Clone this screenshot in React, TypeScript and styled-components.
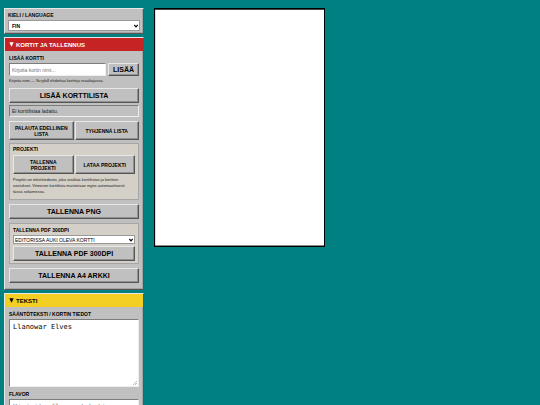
import React from "react";
import styled, { createGlobalStyle, css } from "styled-components";

const GlobalStyle = createGlobalStyle`
  *, *::before, *::after { box-sizing: border-box; }
  html, body { height: 100%; overflow: hidden; }
  body {
    margin: 0;
    background: #008080;
    color: #000;
    font-family: "Liberation Sans", Arial, sans-serif;
    font-size: 5px;
    line-height: 6px;
  }
`;

const raised = css`
  border: 1px solid;
  border-color: #e8e8e8 #555 #555 #e8e8e8;
`;

const sunken = css`
  border: 1px solid;
  border-color: #7c7c7c #eee #eee #7c7c7c;
`;

const Page = styled.div`
  display: grid;
  grid-template-columns: 140px 1fr;
  align-items: start;
  gap: 10px;
  padding: 8px 4px;
`;

const Sidebar = styled.aside`
  display: flex;
  flex-direction: column;
  gap: 3px;
`;

const Panel = styled.section`
  ${raised}
  background: #c0c0c0;
  box-shadow: inset -1px -1px 0 #a4a4a4;
`;

const LanguageBody = styled.div`
  display: flex;
  flex-direction: column;
  gap: 2px;
  padding: 3px 3px 2px;
`;

const PanelTitle = styled.button<{ $tone: "red" | "yellow" }>`
  display: flex;
  align-items: center;
  gap: 2px;
  width: 100%;
  height: 13px;
  padding: 0 4px;
  border: 0;
  background: ${(p) => (p.$tone === "red" ? "#c62424" : "#f2cf22")};
  color: ${(p) => (p.$tone === "red" ? "#fff" : "#000")};
  font: bold 6px/8px "Liberation Sans", Arial, sans-serif;
`;

const Triangle = styled.svg`
  width: 5px;
  height: 5px;
  fill: currentColor;
`;

const PanelBody = styled.div`
  display: flex;
  flex-direction: column;
  padding: 4px 4px 6px;
`;

const Label = styled.label`
  display: block;
  font-weight: bold;
`;

const GroupTitle = styled.h3`
  margin: 0;
  font-size: 5px;
  line-height: 6px;
`;

const AddRow = styled.div`
  display: grid;
  grid-template-columns: 1fr 31px;
  gap: 2px;
  margin: 2px 0;
`;

const TextInput = styled.input`
  ${sunken}
  min-width: 0;
  height: 13px;
  padding: 0 2px;
  background: #fff;
  font: 5px/6px "Liberation Sans", Arial, sans-serif;
  &::placeholder { color: #757575; }
`;

const Button = styled.button<{ $small?: boolean }>`
  ${raised}
  min-width: 0;
  width: 100%;
  height: ${(p) => (p.$small ? "19px" : "15px")};
  padding: 0 4px;
  background: #c0c0c0;
  box-shadow: inset -1px -1px 0 #909090;
  color: #000;
  font: bold ${(p) => (p.$small ? "5px/6px" : "7px/8px")} "Liberation Sans", Arial, sans-serif;
`;

const AddButton = styled(Button)`
  height: 13px;
  padding: 0;
`;

const Hint = styled.p`
  margin: 0;
  color: #222;
  font-size: 4px;
  line-height: 6px;
`;

const Status = styled.output`
  ${sunken}
  display: block;
  height: 12px;
  margin: 2px 0 4px;
  padding: 2px;
  color: #222;
`;

const ButtonPair = styled.div`
  display: grid;
  grid-template-columns: 1fr 1fr;
  gap: 1px;
`;

const Group = styled.div`
  display: flex;
  flex-direction: column;
  border: 1px solid #a6a6a6;
  background: #d4d0c8;
`;

const ProjectGroup = styled(Group)`
  gap: 3px;
  margin: 3px 0 4px;
  padding: 2px 3px 4px;
`;

const ProjectHint = styled(Hint)`
  padding-right: 8px;
`;

const PdfGroup = styled(Group)`
  gap: 2px;
  margin: 4px 0;
  padding: 3px 3px 2px;
`;

const SelectBox = styled.div`
  display: grid;
  align-items: center;
`;

const Select = styled.select<{ $bold?: boolean }>`
  grid-area: 1 / 1;
  appearance: none;
  width: 100%;
  height: ${(p) => (p.$bold ? "11px" : "9px")};
  padding: 0 10px 0 ${(p) => (p.$bold ? "3px" : "1px")};
  border: 1px solid #999;
  border-radius: 0;
  background: #fff;
  color: #000;
  font: ${(p) => (p.$bold ? "bold" : "normal")} 5px/6px "Liberation Sans", Arial, sans-serif;
`;

const Chevron = styled.svg`
  grid-area: 1 / 1;
  justify-self: end;
  width: 4px;
  height: 4px;
  margin-right: 2px;
  fill: none;
  stroke: #000;
  stroke-width: 1.2;
  pointer-events: none;
`;

const TextArea = styled.textarea`
  ${sunken}
  display: block;
  width: 100%;
  height: 68px;
  margin: 2px 0 4px;
  padding: 3px;
  background: #fff;
  color: #000;
  font: 7px/8px "DejaVu Sans Mono", monospace;
  overflow: hidden;
  resize: none;
  &::placeholder { color: #757575; }
`;

const TextAreaBox = styled.div`
  display: grid;
  & > * { grid-area: 1 / 1; }
`;

const Grip = styled.svg`
  place-self: end;
  width: 4px;
  height: 4px;
  margin: 0 2px 6px 0;
  stroke: #777;
  stroke-width: 0.5;
`;

const Card = styled.canvas`
  display: block;
  width: 171px;
  height: 239px;
  border: 1px solid #000;
  box-shadow: inset 0 1px 0 #444, inset 0 -1px 0 #888, inset 1px 0 0 #ddd;
  background: #fff;
`;

type Option = { value: string; text: string };

function DropDown({ id, options, bold }: { id: string; options: Option[]; bold?: boolean }) {
  return (
    <SelectBox>
      <Select id={id} $bold={bold}>
        {options.map((o) => (
          <option key={o.value} value={o.value}>{o.text}</option>
        ))}
      </Select>
      <Chevron viewBox="0 0 4 4" aria-hidden="true"><path d="M0.3 1 2 2.8 3.7 1" /></Chevron>
    </SelectBox>
  );
}

function Title({ tone, children }: { tone: "red" | "yellow"; children: React.ReactNode }) {
  return (
    <PanelTitle type="button" aria-expanded="true" $tone={tone}>
      <Triangle viewBox="0 0 5 5" aria-hidden="true"><path d="M.3 .3H4.7L2.5 4.8Z" /></Triangle>
      {children}
    </PanelTitle>
  );
}

function ResizableText({ id, value, placeholder }: { id: string; value?: string; placeholder?: string }) {
  return (
    <TextAreaBox>
      <TextArea id={id} defaultValue={value} placeholder={placeholder} spellCheck={false} />
      <Grip viewBox="0 0 4 4" aria-hidden="true"><path d="M0 4 4 0M2 4 4 2" /></Grip>
    </TextAreaBox>
  );
}

export default function App() {
  return (
    <>
      <GlobalStyle />
      <Page>
        <Sidebar>
          <Panel>
            <LanguageBody>
              <Label htmlFor="language">KIELI / LANGUAGE</Label>
              <DropDown id="language" bold options={[{ value: "fi", text: "FIN" }]} />
            </LanguageBody>
          </Panel>

          <Panel>
            <Title tone="red">KORTIT JA TALLENNUS</Title>
            <PanelBody>
              <Label htmlFor="card-name">LISÄÄ KORTTI</Label>
              <AddRow>
                <TextInput id="card-name" placeholder="Kirjoita kortin nimi..." />
                <AddButton type="button">LISÄÄ</AddButton>
              </AddRow>
              <ListHint>Kirjoita nimi — Scryfall ehdottaa kortteja reaaliajassa.</ListHint>
              <Button type="button">LISÄÄ KORTTILISTA</Button>
              <Status>Ei korttilistaa ladattu.</Status>
              <ButtonPair>
                <Button type="button" $small>PALAUTA EDELLINEN LISTA</Button>
                <Button type="button" $small>TYHJENNÄ LISTA</Button>
              </ButtonPair>
              <ProjectGroup>
                <GroupTitle>PROJEKTI</GroupTitle>
                <ButtonPair>
                  <Button type="button" $small>TALLENNA PROJEKTI</Button>
                  <Button type="button" $small>LATAA PROJEKTI</Button>
                </ButtonPair>
                <ProjectHint>
                  Projekti on tekstitiedosto, joka sisältää korttilistan ja korttien
                  asetukset. Viimeisin korttilista muistetaan myös automaattisesti
                  tässä selaimessa.
                </ProjectHint>
              </ProjectGroup>
              <Button type="button">TALLENNA PNG</Button>
              <PdfGroup>
                <Label htmlFor="pdf-source">TALLENNA PDF 300DPI</Label>
                <DropDown id="pdf-source" options={[{ value: "current", text: "EDITORISSA AUKI OLEVA KORTTI" }]} />
                <Button type="button">TALLENNA PDF 300DPI</Button>
              </PdfGroup>
              <Button type="button">TALLENNA A4 ARKKI</Button>
            </PanelBody>
          </Panel>

          <Panel>
            <Title tone="yellow">TEKSTI</Title>
            <PanelBody>
              <Label htmlFor="rules">SÄÄNTÖTEKSTI / KORTIN TIEDOT</Label>
              <ResizableText id="rules" value="Llanowar Elves" />
              <Label htmlFor="flavor">FLAVOR</Label>
              <ResizableText id="flavor" placeholder="Kirjoita flavor-teksti..." />
            </PanelBody>
          </Panel>
        </Sidebar>
        <main>
          <Card aria-label="Kortti" />
        </main>
      </Page>
    </>
  );
}

const ListHint = styled(Hint)`
  margin-bottom: 4px;
`;
